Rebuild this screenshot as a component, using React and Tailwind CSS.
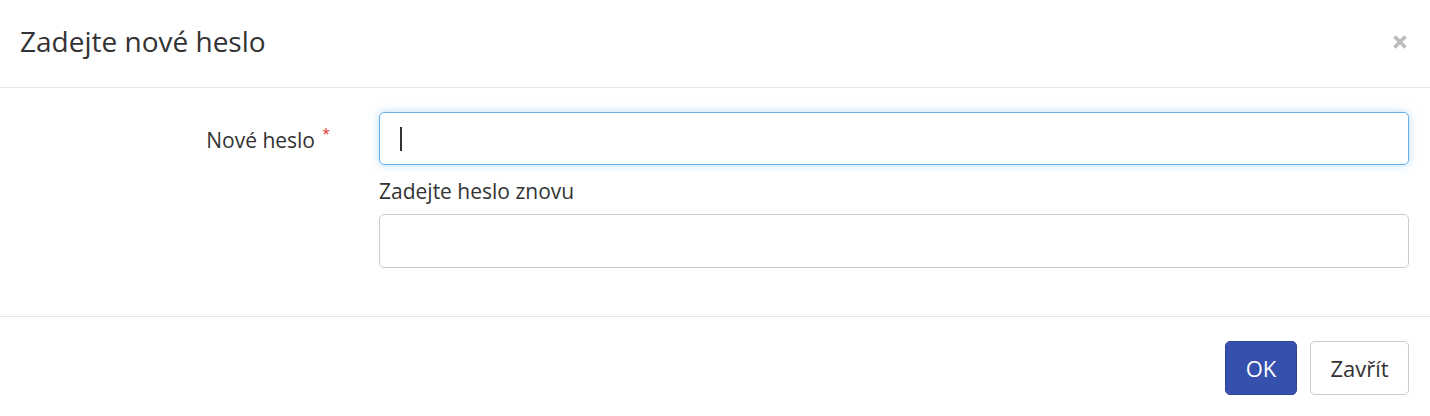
import React from 'react';

export default function App() {
  return (
    <div className="w-[1430px] h-[416px] bg-white text-[#333] font-['Open_Sans',sans-serif]">
      {/* header */}
      <div className="h-[88px] flex items-center justify-between pl-[20px] pr-[22px] border-b border-[#e5e5e5]">
        <h4 className="text-[28px] leading-none pb-[5px]">Zadejte nové heslo</h4>
        <button className="text-[#bdbdbd] -mt-[4px]">
          <svg width="16" height="16" viewBox="0 0 16 16">
            <path d="M2.5 2.5 L13.5 13.5 M13.5 2.5 L2.5 13.5" stroke="currentColor" strokeWidth="3.6" strokeLinecap="butt" />
          </svg>
        </button>
      </div>

      {/* body */}
      <div className="h-[229px] pt-[24px] pl-[20px] pr-[21px] flex border-b border-[#e5e5e5]">
        <div className="w-[359px] pr-[64px] pt-[13px] text-right text-[21px] relative">
          Nové heslo
          <span className="absolute right-[49px] top-[11px] text-[#e0342f] text-[14px]">*</span>
        </div>
        <div className="flex-1 flex flex-col">
          <div className="h-[53px] rounded-[5px] border border-[#66afe9] shadow-[0_0_8px_rgba(102,175,233,0.45)] flex items-center pl-[20px]">
            <div className="w-[2px] h-[24px] bg-[#333]"></div>
          </div>
          <label className="mt-[12px] text-[21px] leading-[28px]">Zadejte heslo znovu</label>
          <div className="mt-[9px] h-[54px] rounded-[5px] border border-[#ccc]"></div>
        </div>
      </div>

      {/* footer */}
      <div className="flex justify-end gap-[13px] pt-[24px] pr-[21px]">
        <button className="w-[72px] h-[54px] rounded-[5px] bg-[#3550ad] border border-[#2d4597] text-white text-[22px]">OK</button>
        <button className="w-[99px] h-[54px] rounded-[5px] bg-white border border-[#ccc] text-[#333] text-[22px]">Zavřít</button>
      </div>
    </div>
  );
}
